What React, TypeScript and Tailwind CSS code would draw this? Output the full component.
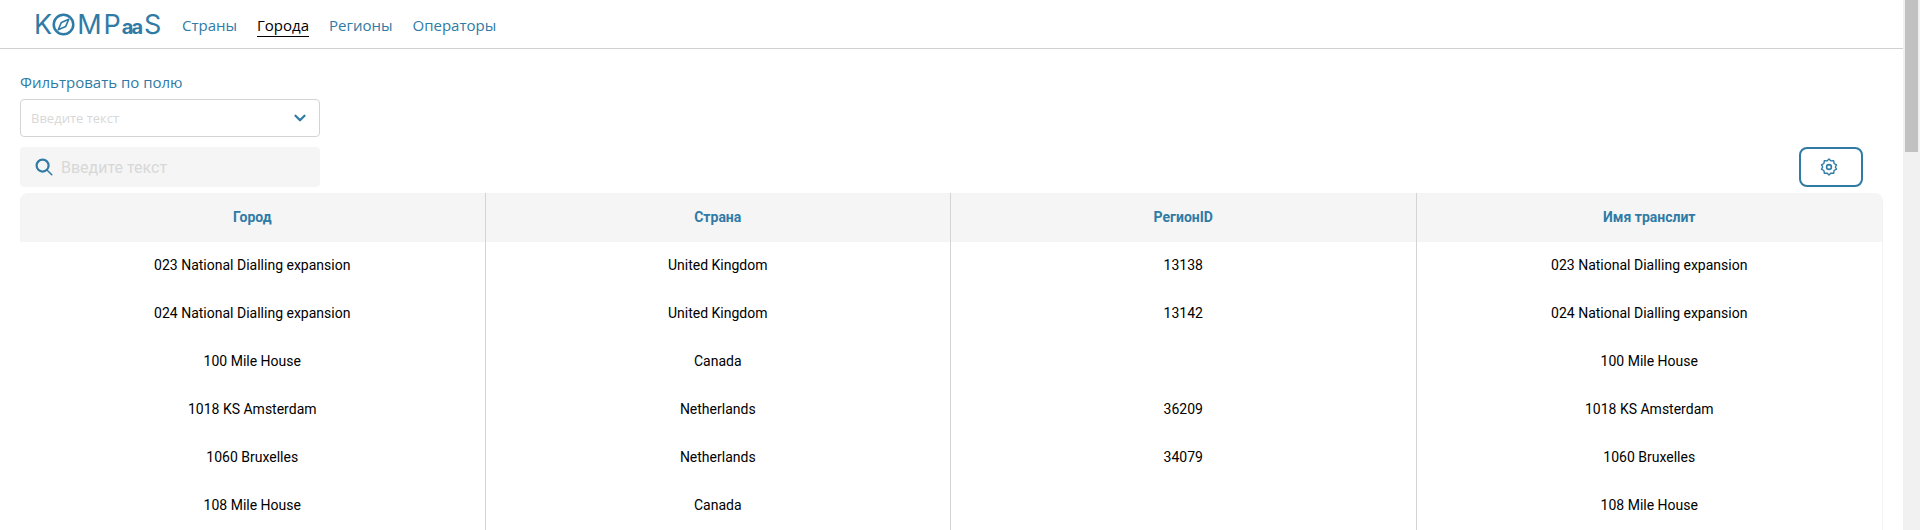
import { ChevronDown } from 'lucide-react'

const navItems = ['Страны', 'Города', 'Регионы', 'Операторы']
const columns = ['Город', 'Страна', 'РегионID', 'Имя транслит']

const rows = [
  ['023 National Dialling expansion', 'United Kingdom', '13138', '023 National Dialling expansion'],
  ['024 National Dialling expansion', 'United Kingdom', '13142', '024 National Dialling expansion'],
  ['100 Mile House', 'Canada', '', '100 Mile House'],
  ['1018 KS Amsterdam', 'Netherlands', '36209', '1018 KS Amsterdam'],
  ['1060 Bruxelles', 'Netherlands', '34079', '1060 Bruxelles'],
  ['108 Mile House', 'Canada', '', '108 Mile House'],
]

function Logo() {
  return (
    <div className="-ml-[2px] flex h-[24px] w-[126px] items-center font-['Inter',sans-serif] text-[27px] leading-none text-[#2f7ba6]">
      <span>K</span>
      <svg viewBox="0 0 24 24" className="h-[23px] w-[23px] shrink-0" fill="none">
        <circle cx="12" cy="12" r="10.2" stroke="#2f7ba6" strokeWidth="2.6" />
        <path d="M17.5 6.5l-3.3 7.7-7.700 3.3 3.300-7.700z" stroke="#2f7ba6" strokeWidth="1.700" strokeLinejoin="round" />
      </svg>
      <span className="ml-[2px]">M</span>
      <span className="ml-[2px]">P</span>
      <span className="ml-[1px] mt-[6px] text-[20px] font-bold tracking-[-2px]">aa</span>
      <span className="ml-[3px]">S</span>
    </div>
  )
}

function GearIcon() {
  return (
    <svg viewBox="0 0 18 18" className="mr-[4px] h-[18px] w-[18px]" fill="none" stroke="#2f7ba6" strokeWidth="1.4" strokeLinejoin="round">
      <path d="M9 1l2 1.900 2.700-.1.400 2.700 2.400 1.400L15.300 9l1.200 2.100-2.400 1.400-.4 2.700-2.700-.1L9 17l-2-1.900-2.700.1-.4-2.700-2.400-1.400L2.700 9 1.500 6.900l2.400-1.400.4-2.700 2.700.1z" />
      <circle cx="9" cy="9" r="2.400" strokeWidth="1.600" />
    </svg>
  )
}

function SearchIcon() {
  return (
    <svg viewBox="0 0 18 18" className="h-[18px] w-[18px]" fill="none" stroke="#2f7ba6" strokeLinecap="round">
      <circle cx="7.600" cy="7.600" r="6" strokeWidth="2.200" />
      <path d="M12.200 12.200l4.600 4.600" strokeWidth="1.500" />
    </svg>
  )
}

function Header() {
  return (
    <header className="flex h-[49px] items-center border-b border-[#d0d0d0] pl-[36px]">
      <Logo />
      <nav className="ml-[22px] flex gap-[20px] pt-[3px] font-['Open_Sans',sans-serif] text-[15px] leading-[20px]">
        {navItems.map((item) => (
          <a
            key={item}
            className={
              item === 'Города'
                ? 'border-b border-black pb-[1px] text-black'
                : 'border-b border-transparent pb-[1px] text-[#2f7ba6]'
            }
          >
            {item}
          </a>
        ))}
      </nav>
    </header>
  )
}

function Filters() {
  return (
    <div className="px-[20px] pt-[24px]">
      <div className="font-['Open_Sans',sans-serif] text-[15px] leading-[19px] text-[#2f7ba6]">Фильтровать по полю</div>
      <div className="mt-[7px] flex h-[38px] w-[300px] items-center justify-between rounded-[4px] border border-[#d4d4d4] pl-[10px] pr-[10px]">
        <span className="mt-[1px] font-['Open_Sans',sans-serif] text-[13px] text-[#d8d8d8]">Введите текст</span>
        <ChevronDown className="h-[18px] w-[18px] text-[#2f7ba6]" strokeWidth={3} />
      </div>
      <div className="mt-[10px] flex items-start justify-between pr-[20px]">
        <div className="flex h-[40px] w-[300px] items-center rounded-[4px] bg-[#f5f5f5] pl-[15px]">
          <SearchIcon />
          <span className="ml-[8px] mt-[1px] font-['Roboto',sans-serif] text-[16px] text-[#d8d8d8]">Введите текст</span>
        </div>
        <button className="flex h-[40px] w-[64px] items-center justify-center rounded-[8px] border-2 border-[#2f7ba6]">
          <GearIcon />
        </button>
      </div>
    </div>
  )
}

function CitiesTable() {
  return (
    <div className="mx-[20px] mt-[6px] overflow-hidden rounded-t-[8px] border-r border-[#f3f3f3] font-['Roboto',sans-serif]">
      <div className="grid h-[49px] grid-cols-4 bg-[#f5f5f5]">
        {columns.map((col, i) => (
          <div
            key={col}
            className={
              i < 3
                ? 'flex items-center justify-center border-r border-[#d4d4d4] text-[14px] font-bold text-[#2f7ba6]'
                : 'flex items-center justify-center text-[14px] font-bold text-[#2f7ba6]'
            }
          >
            {col}
          </div>
        ))}
      </div>
      {rows.map((row) => (
        <div key={row[0]} className="grid h-[48px] grid-cols-4">
          {row.map((cell, i) => (
            <div
              key={i}
              className={
                i < 3
                  ? 'flex items-center justify-center border-r border-[#d4d4d4] pb-[1px] text-[14px] text-black'
                  : 'flex items-center justify-center pb-[1px] text-[14px] text-black'
              }
            >
              {cell}
            </div>
          ))}
        </div>
      ))}
    </div>
  )
}

export default function App() {
  return (
    <div className="flex h-[530px] overflow-hidden bg-white">
      <main className="min-w-0 flex-1">
        <Header />
        <Filters />
        <CitiesTable />
      </main>
      {/* scrollbar */}
      <div className="w-[17px] shrink-0 bg-[#f1f1f1] px-[2px]">
        <div className="h-[152px] bg-[#c1c1c1]" />
      </div>
    </div>
  )
}
